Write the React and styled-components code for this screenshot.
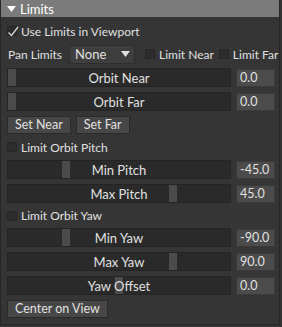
import React from "react";
import styled, { createGlobalStyle } from "styled-components";

const Global = createGlobalStyle`
  html, body { margin: 0; padding: 0; background: #333333; }
  body { font-family: Lato, "Liberation Sans", sans-serif; font-size: 12px; color: #e0e0e0; }
  * { box-sizing: border-box; }
`;

const Panel = styled.div`
  width: 280px;
  height: 325px;
  background: #353535;
  border: 1px solid #262626;
  border-top: none;
  display: flex;
  flex-direction: column;
`;

const Header = styled.div`
  height: 17px;
  background: #7b7b7b;
  display: flex;
  align-items: center;
  gap: 4px;
  padding-left: 6px;
  color: #ffffff;
  font-size: 13px;
`;

const Content = styled.div`
  display: flex;
  flex-direction: column;
  gap: 5px;
  padding: 5px 4px 0 6px;
`;

const Row = styled.div`
  display: flex;
  align-items: center;
  height: ${(p) => p.$h || 18}px;
  gap: ${(p) => p.$gap || 0}px;
`;

const CheckLabel = styled.label`
  display: flex;
  align-items: center;
  gap: 3px;
  margin-left: ${(p) => p.$ml || 0}px;
  white-space: nowrap;
  flex: none;
`;

const Box = styled.span`
  width: 10px;
  height: 10px;
  background: #2c2c2c;
  border: 1px solid #272727;
  position: relative;
  flex: none;
`;

const CheckMark = styled.svg`
  position: absolute;
  left: -1px;
  top: -3px;
`;

const Label = styled.span`
  margin-left: 1px;
  white-space: nowrap;
  flex: none;
`;

const Select = styled.div`
  flex: none;
  width: 66px;
  height: 19px;
  margin-left: 7px;
  background: #3e3e3e;
  border: 1px solid #2d2d2d;
  display: flex;
  align-items: center;
  justify-content: space-between;
  padding: 0 4px 0 5px;
  font-size: 13px;
`;

const Track = styled.div`
  position: relative;
  flex: none;
  width: 224px;
  height: 19px;
  background: #2a2a2a;
  border: 1px solid #242424;
  display: flex;
  align-items: center;
  justify-content: center;
`;

const Handle = styled.div`
  position: absolute;
  top: 0;
  bottom: 0;
  width: 8px;
  background: #4b4b4b;
`;

const TrackLabel = styled.span`
  position: relative;
  z-index: 1;
  color: #e0e0e0;
  font-size: 13px;
`;

const Value = styled.div`
  flex: none;
  width: 39px;
  height: 18px;
  background: #4b4b4b;
  border: 1px solid #3a3a3a;
  display: flex;
  align-items: center;
  padding-left: 3px;
  color: #e0e0e0;
  font-size: 12.5px;
`;

const Button = styled.button`
  flex: none;
  height: 18px;
  padding: 0 ${(p) => p.$px || 7}px;
  background: #474747;
  border: 1px solid #2b2b2b;
  color: #e0e0e0;
  font-family: inherit;
  font-size: 12.5px;
  display: flex;
  align-items: center;
  line-height: 1;
`;

function Check({ checked, children, ml }) {
  return (
    <CheckLabel $ml={ml}>
      <Box>
        {checked && (
          <CheckMark width="12" height="14" viewBox="0 0 12 14">
            <polyline points="1.5,8.5 4.5,11.5 11,3" fill="none" stroke="#d8d8d8" strokeWidth="1.3" />
          </CheckMark>
        )}
      </Box>
      <Label>{children}</Label>
    </CheckLabel>
  );
}

function Slider({ label, value, frac }) {
  return (
    <Row $h={19} $gap={5}>
      <Track>
        <Handle style={{ left: `${frac * 214}px` }} />
        <TrackLabel>{label}</TrackLabel>
      </Track>
      <Value>{value}</Value>
    </Row>
  );
}

export default function App() {
  return (
    <>
      <Global />
      <Panel>
        <Header>
          <svg width="9" height="6" viewBox="0 0 9 6">
            <polygon points="0,0 9,0 4.5,6" fill="#ffffff" />
          </svg>
          <span>Limits</span>
        </Header>
        <Content>
          <Row $h={18}>
            <Check checked>Use Limits in Viewport</Check>
          </Row>
          <Row $h={18}>
            <Label>Pan Limits</Label>
            <Select>
              <span>None</span>
              <svg width="9" height="6" viewBox="0 0 9 6">
                <polygon points="0,0 9,0 4.5,6" fill="#e0e0e0" />
              </svg>
            </Select>
            <Check ml={10}>Limit Near</Check>
            <Check ml={5}>Limit Far</Check>
          </Row>
          <Slider label="Orbit Near" value="0.0" frac={0} />
          <Slider label="Orbit Far" value="0.0" frac={0} />
          <Row $h={18} $gap={5}>
            <Button>Set Near</Button>
            <Button>Set Far</Button>
          </Row>
          <Row $h={16}>
            <Check>Limit Orbit Pitch</Check>
          </Row>
          <Slider label="Min Pitch" value="-45.0" frac={0.25} />
          <Slider label="Max Pitch" value="45.0" frac={0.75} />
          <Row $h={15}>
            <Check>Limit Orbit Yaw</Check>
          </Row>
          <Slider label="Min Yaw" value="-90.0" frac={0.25} />
          <Slider label="Max Yaw" value="90.0" frac={0.75} />
          <Slider label="Yaw Offset" value="0.0" frac={0.5} />
          <Row $h={18}>
            <Button>Center on View</Button>
          </Row>
        </Content>
      </Panel>
    </>
  );
}
